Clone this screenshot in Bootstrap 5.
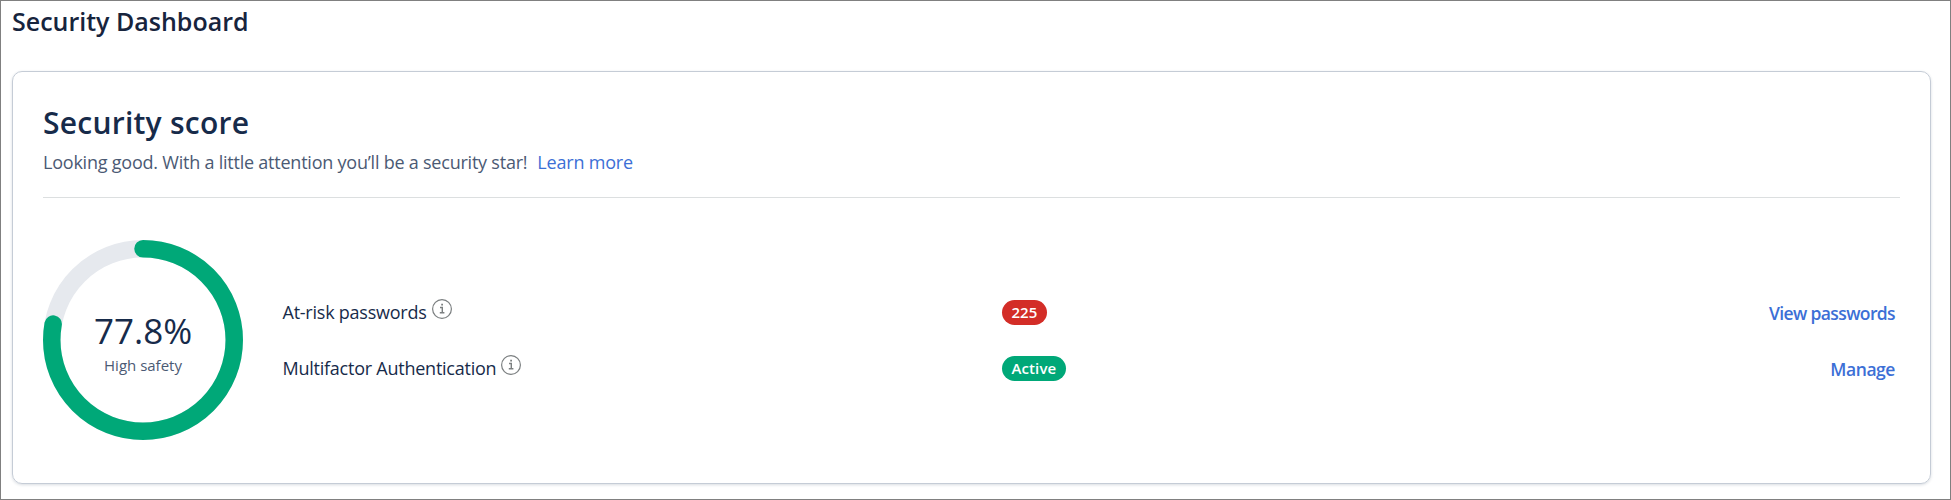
<!DOCTYPE html>
<html lang="en">
<head>
<meta charset="utf-8">
<meta name="viewport" content="width=device-width, initial-scale=1">
<title>Security Dashboard</title>
<link href="https://cdn.jsdelivr.net/npm/bootstrap@5.3.0/dist/css/bootstrap.min.css" rel="stylesheet">
<style>
body{font-family:"Open Sans","Noto Sans",sans-serif;color:#172b4a;background:#fff;font-size:18px}
.page{height:500px;border:1px solid #808080;padding:0 19px 0 11px}
.page-title{font-size:25px;line-height:32px;font-weight:600;color:#17243d;margin:4px 0 34px;white-space:nowrap}
.score-card{height:413px;border:1px solid #c5ccd6;border-radius:10px;box-shadow:0 1px 3px rgba(40,60,90,.18);padding:30px 30px 0}
.score-title{font-size:30px;line-height:42px;font-weight:600;letter-spacing:.24px;margin:0;white-space:nowrap}
.intro{line-height:26px;letter-spacing:-.225px;margin:5px 0 0;color:#4b5a74;white-space:nowrap}
.intro .link{margin-left:10px;letter-spacing:-.2px}
.link{color:#3c6fd6;text-decoration:none}
.divider{height:1px;background:#dcdfe0;margin:22px 0 42px}
.gauge{width:200px;height:200px;flex:none}
.gauge-text{padding-top:69px}
.pct{font-size:35px;line-height:44px}
.safety{font-size:15px;line-height:20px;color:#4b5a74;margin-top:2px}
.score-rows{margin:44px 5px 0 39.5px}
.score-row{height:56px;display:grid;grid-template-columns:719.5px 1fr auto}
.row-label{letter-spacing:-.24px}
.pill{font-size:15px;line-height:25px;height:25px;font-weight:600;border-radius:13px;padding:0 9.5px;color:#fff}
.risk{background:#d32d27}
.active-pill{background:#00a878;letter-spacing:.1px}
.action{font-weight:600;font-size:17.5px;letter-spacing:-.62px;position:relative;top:1px}
.action-short{letter-spacing:-.45px}
.info{width:20px;height:20px;margin:-7px 0 0 5px}
</style>
</head>
<body>
<main class="page">
<h1 class="page-title">Security Dashboard</h1>
<section class="score-card">
<h2 class="score-title">Security score</h2>
<p class="intro">Looking good. With a little attention you’ll be a security star!<a class="link" href="#">Learn more</a></p>
<div class="divider"></div>
<div class="d-flex">
<div class="gauge position-relative">
<svg class="d-block" width="200" height="200" viewBox="0 0 200 200" fill="none" stroke-width="17.5">
<circle cx="100" cy="100" r="91.25" stroke="#e6e9ee"/>
<circle cx="100" cy="100" r="91.25" stroke="#00a878" stroke-linecap="round" pathLength="100" stroke-dasharray="77.8 100" transform="rotate(-90 100 100)"/>
</svg>
<div class="gauge-text position-absolute top-0 start-0 w-100 h-100 d-flex flex-column align-items-center">
<div class="pct">77.8%</div><div class="safety">High safety</div>
</div>
</div>
<div class="score-rows flex-grow-1">
<div class="score-row align-items-center"><div class="d-flex align-items-center"><span class="row-label">At-risk passwords</span>
<svg class="info" viewBox="0 0 20 20" fill="none" stroke="#7b7f80"><circle cx="10" cy="10" r="9.4" stroke-width="1.2"/><path d="M8 8.5h2.3v5M7.8 13.8h4.6" stroke-width="1.4"/><path d="M9.2 5.7h1.8" stroke-width="1.8"/></svg></div>
<div class="d-flex"><span class="pill risk">225</span></div><a class="link action" href="#">View passwords</a></div>
<div class="score-row align-items-center"><div class="d-flex align-items-center"><span class="row-label">Multifactor Authentication</span>
<svg class="info" viewBox="0 0 20 20" fill="none" stroke="#7b7f80"><circle cx="10" cy="10" r="9.4" stroke-width="1.2"/><path d="M8 8.5h2.3v5M7.8 13.8h4.6" stroke-width="1.4"/><path d="M9.2 5.7h1.8" stroke-width="1.8"/></svg></div>
<div class="d-flex"><span class="pill active-pill">Active</span></div><a class="link action action-short" href="#">Manage</a></div>
</div>
</div>
</section>
</main>
<script src="https://cdn.jsdelivr.net/npm/bootstrap@5.3.0/dist/js/bootstrap.bundle.min.js"></script>
</body>
</html>
